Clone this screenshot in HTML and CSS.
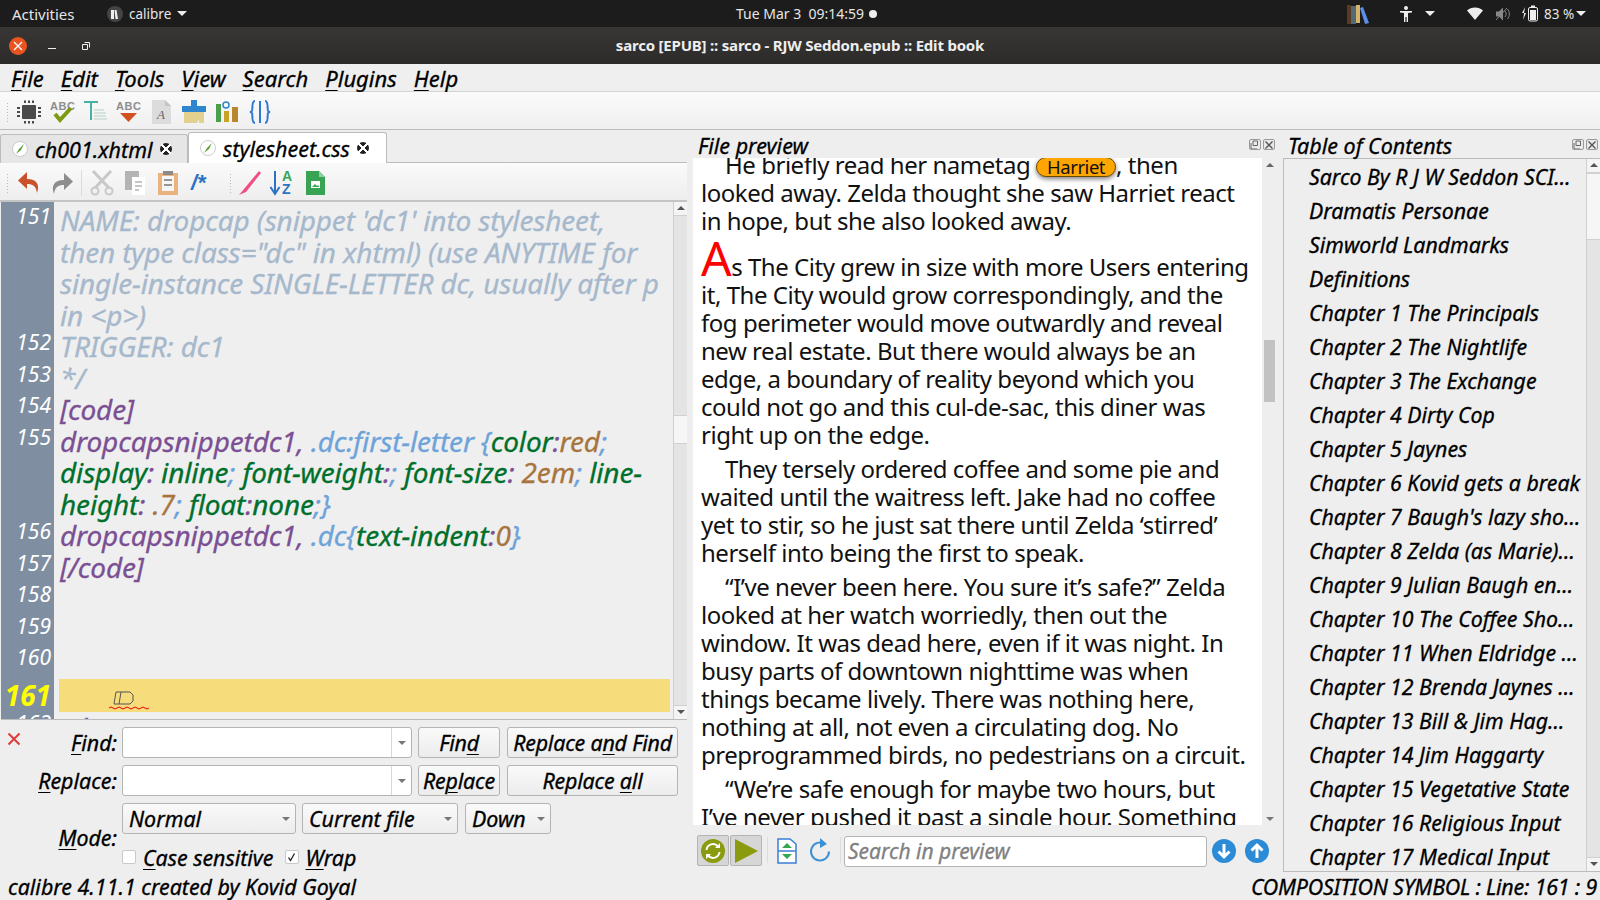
FILE: index.html
```html
<!DOCTYPE html>
<html lang="en">
<head>
<meta charset="utf-8">
<title>sarco - Edit book</title>
<link rel="stylesheet" href="styles.css">
</head>
<body>
<header class="topbar">
  <span class="activities">Activities</span>
  <span class="appmenu">
    <span class="appdot"><svg width="14" height="14" viewBox="0 0 14 14"><path d="M3 3h3v9H3zM6.500 3h2l1.500 9h-2.500z" fill="#eee"/></svg></span>
    calibre <i class="tri"></i>
  </span>
  <span class="clock">Tue Mar 3&nbsp; 09:14:59 <i class="dot"></i></span>
  <span class="tray">
    <svg class="tray-books" width="22" height="22" viewBox="0 0 22 22"><rect x="0" y="2" width="4" height="19" fill="#5a3a22"/><rect x="4" y="3" width="5" height="18" fill="#4f6a78"/><rect x="9" y="2" width="4" height="18" fill="#d8b36a"/><path d="M13 5l3-1 6 16-4 1z" fill="#5a8ee8"/></svg>
    <svg class="tray-person" width="14" height="18" viewBox="0 0 14 18"><circle cx="7" cy="3" r="2" fill="#eee"/><path d="M1 6h12v1.500l-4 .5v9H7.600v-5h-1.200v5H5V8L1 7.500z" fill="#eee"/></svg>
    <i class="tri tray-tri"></i>
    <svg class="tray-wifi" width="16" height="13" viewBox="0 0 16 13"><path d="M0 3.500C4-.5 12-.5 16 3.500L8 13z" fill="#eee"/></svg>
    <svg class="tray-vol" width="16" height="16" viewBox="0 0 16 16"><path d="M1 5.500h3l4-4v13l-4-4H1z" fill="#888"/><path d="M10 5c1.500 2 1.500 4 0 6M12.500 3c2.500 3 2.500 7 0 10" stroke="#888" fill="none"/><path d="M1 14L12 2" stroke="#888"/></svg>
    <svg class="tray-bat" width="16" height="17" viewBox="0 0 16 17"><path d="M3 2L0 8h2v1L1 15l3-7H2z" fill="#eee"/><rect x="6.500" y="2.500" width="9" height="13.500" rx="1.500" fill="none" stroke="#eee"/><rect x="9" y="0.500" width="4" height="2" fill="#eee"/><rect x="8" y="5" width="6" height="10" fill="#eee"/></svg>
    <span class="tray-pct">83 %</span>
    <i class="tri"></i>
  </span>
</header>

<div class="titlebar">
  <span class="win-btns">
    <span class="win-close"><svg width="10" height="10" viewBox="0 0 10 10"><path d="M1 1l8 8M9 1l-8 8" stroke="#fff" stroke-width="1.300"/></svg></span>
    <span class="win-min"></span>
    <span class="win-max"><svg width="8" height="8" viewBox="0 0 8 8"><path d="M2.500.5h5v5M.5 2.500h5v5h-5z" fill="none" stroke="#eee"/></svg></span>
  </span>
  <span class="wintitle">sarco [EPUB] :: sarco - RJW Seddon.epub :: Edit book</span>
</div>

<nav class="menubar">
  <span><u>F</u>ile</span><span><u>E</u>dit</span><span><u>T</u>ools</span><span><u>V</u>iew</span><span><u>S</u>earch</span><span><u>P</u>lugins</span><span><u>H</u>elp</span>
</nav>

<div class="toolbar tb-main">
  <i class="grip"></i>
  <span class="tool"><svg width="26" height="26" viewBox="0 0 26 26"><rect x="6" y="6" width="14" height="14" rx="1" fill="#4a4a4a"/><path d="M9 1.500v2.500M13 1.500v2.500M17 1.500v2.500M9 22v2.500M13 22v2.500M17 22v2.500M1 9h3M1 13h3M1 17h3M22 9h3M22 13h3M22 17h3" stroke="#4a4a4a" stroke-width="2"/></svg></span>
  <span class="tool"><svg width="26" height="26" viewBox="0 0 26 26"><text x="1" y="11" class="ic-abc">ABC</text><path d="M6 15l5 6L22 9" fill="none" stroke="#7d9a12" stroke-width="4"/></svg></span>
  <span class="tool"><svg width="26" height="26" viewBox="0 0 26 26"><path d="M2 3h14M9 3v18" stroke="#44b3a4" stroke-width="2" fill="none"/><path d="M12 11h10M12 14h12M12 17h12M12 20h13" stroke="#b8cfc8"/></svg></span>
  <span class="tool"><svg width="26" height="26" viewBox="0 0 26 26"><text x="1" y="11" class="ic-abc">ABC</text><path d="M5 14h17l-8.500 9z" fill="#d2521f"/></svg></span>
  <span class="tool"><svg width="26" height="26" viewBox="0 0 26 26"><path d="M4 1h13l6 6v18H4z" fill="#dcdcdc"/><path d="M17 1l6 6h-6z" fill="#c4c4c4"/><text x="9" y="20" class="ic-a">A</text></svg></span>
  <span class="tool"><svg width="26" height="26" viewBox="0 0 26 26"><path d="M10 1h6v6h9v6H1V7h9z" fill="#2e86cf"/><path d="M3 13h20v11h-5v-4l-2 4H3z" fill="#e2d08e"/></svg></span>
  <span class="tool"><svg width="26" height="26" viewBox="0 0 26 26"><rect x="2" y="5" width="5" height="18" fill="#4a9e4c"/><rect x="10" y="12" width="5" height="11" fill="#c9a227"/><rect x="18" y="8" width="6" height="15" fill="#b8862c"/><circle cx="12" cy="6" r="3" fill="none" stroke="#2e86cf" stroke-width="1.500"/></svg></span>
  <span class="tool"><svg width="26" height="26" viewBox="0 0 26 26"><path d="M8 2c-4 0-2 9-3 10-.5.700-2 1-2 1s1.500.3 2 1c1 1-1 10 3 10M18 2c4 0 2 9 3 10 .5.700 2 1 2 1s-1.500.3-2 1c-1 1 1 10-3 10" fill="none" stroke="#2c78d4" stroke-width="2"/><path d="M13 2v22" stroke="#2c78d4" stroke-width="2"/></svg></span>
</div>

<main class="workspace">
  <section class="left">
    <div class="tabs">
      <span class="tab"><svg class="tab-ic" width="16" height="16" viewBox="0 0 16 16"><circle cx="8" cy="8" r="7.500" fill="#fff" stroke="#ccc"/><path d="M4 13l3-5 5-5-3 6z" fill="#5a9e2f"/></svg>ch001.xhtml<i class="tab-x"></i></span>
      <span class="tab tab-on"><svg class="tab-ic" width="16" height="16" viewBox="0 0 16 16"><circle cx="8" cy="8" r="7.500" fill="#fff" stroke="#ccc"/><path d="M4 13l3-5 5-5-3 6z" fill="#5a9e2f"/></svg>stylesheet.css<i class="tab-x"></i></span>
    </div>
    <div class="toolbar tb-edit">
      <i class="grip"></i>
      <span class="tool"><svg width="26" height="26" viewBox="0 0 26 26"><path d="M11 2L2 10.500l9 8.500v-5c6 0 9 2 10 9 3-8 0-14-10-14z" fill="#c9502a"/></svg></span>
      <span class="tool"><svg width="26" height="26" viewBox="0 0 26 26"><path d="M15 3l9 8.500-9 8.500v-5c-6 0-9 2-10 9-3-8 0-14 10-14z" fill="#8d8d8d"/></svg></span>
      <i class="sep"></i>
      <span class="tool"><svg width="26" height="26" viewBox="0 0 26 26"><path d="M4 1l16 17M22 1L6 18" stroke="#c8c8c8" stroke-width="3"/><circle cx="6" cy="21" r="3.500" fill="none" stroke="#c8c8c8" stroke-width="2"/><circle cx="20" cy="21" r="3.500" fill="none" stroke="#c8c8c8" stroke-width="2"/></svg></span>
      <span class="tool"><svg width="26" height="26" viewBox="0 0 26 26"><rect x="3" y="1" width="14" height="19" fill="#b4b4b4"/><rect x="10" y="7" width="13" height="18" fill="#fff"/><path d="M13 12h7M13 16h7M13 20h4" stroke="#b4b4b4" stroke-width="1.500"/></svg></span>
      <span class="tool"><svg width="26" height="26" viewBox="0 0 26 26"><rect x="3" y="3" width="20" height="22" fill="#e9b27e"/><rect x="7" y="6" width="12" height="15" fill="#f6f6f6"/><rect x="8" y="1" width="10" height="4" fill="#8a8a8a"/><path d="M9 10h8M9 15h8" stroke="#777" stroke-width="1.500"/></svg></span>
      <span class="tool"><svg width="26" height="26" viewBox="0 0 26 26"><text x="3" y="20" class="ic-cm">/*</text></svg></span>
      <i class="grip grip-mid"></i>
      <span class="tool"><svg width="26" height="26" viewBox="0 0 26 26"><path d="M23 1L8 19l-5 6 7-3L25 3z" fill="#ef4d86"/></svg></span>
      <span class="tool"><svg width="26" height="26" viewBox="0 0 26 26"><path d="M6 1v21M1.500 17L6 24l4.500-7" fill="none" stroke="#2a72c4" stroke-width="2"/><text x="13" y="11" class="ic-az ic-az-a">A</text><text x="13" y="24" class="ic-az ic-az-z">Z</text></svg></span>
      <span class="tool"><svg width="26" height="26" viewBox="0 0 26 26"><path d="M4 1h13l6 6v18H4z" fill="#38a353"/><path d="M17 1l6 6h-6z" fill="#8fd0a0"/><rect x="9" y="11" width="9" height="7" fill="#fff"/><path d="M10 17l3-3 2 2 1-1 1.500 2z" fill="#38a353"/></svg></span>
    </div>

    <div class="editor">
      <div class="gutter"></div>
      <div class="code">
        <div class="ln"><b>151</b><p class="c-com">NAME: dropcap (snippet 'dc1' into stylesheet,<br>then type class="dc" in xhtml) (use ANYTIME for<br>single-instance SINGLE-LETTER dc, usually after p<br>in &lt;p&gt;)</p></div>
        <div class="ln"><b>152</b><p class="c-com">TRIGGER: dc1</p></div>
        <div class="ln"><b>153</b><p class="c-com">*/</p></div>
        <div class="ln"><b>154</b><p class="c-pur">[code]</p></div>
        <div class="ln"><b>155</b><p><span class="c-pur">dropcapsnippetdc1,</span> <span class="c-blu">.dc:first-letter {</span><span class="c-grn">color</span><span class="c-pur">:</span><span class="c-brn">red</span><span class="c-blu">;</span><br><span class="c-grn">display</span><span class="c-pur">:</span> <span class="c-grn">inline</span><span class="c-blu">;</span> <span class="c-grn">font-weight</span><span class="c-pur">:</span><span class="c-blu">;</span> <span class="c-grn">font-size</span><span class="c-pur">:</span> <span class="c-brn">2em</span><span class="c-blu">;</span> <span class="c-grn">line-</span><br><span class="c-grn">height</span><span class="c-pur">:</span> <span class="c-brn">.7</span><span class="c-blu">;</span> <span class="c-grn">float</span><span class="c-pur">:</span><span class="c-grn">none</span><span class="c-blu">;}</span></p></div>
        <div class="ln"><b>156</b><p><span class="c-pur">dropcapsnippetdc1,</span> <span class="c-blu">.dc{</span><span class="c-grn">text-indent</span><span class="c-pur">:</span><span class="c-brn">0</span><span class="c-blu">}</span></p></div>
        <div class="ln"><b>157</b><p class="c-pur">[/code]</p></div>
        <div class="ln"><b>158</b><p>&nbsp;</p></div>
        <div class="ln"><b>159</b><p>&nbsp;</p></div>
        <div class="ln"><b>160</b><p>&nbsp;</p></div>
        <div class="ln ln-cur"><b>161</b><p><span class="cs-wrap"><span class="cs-glyph"><svg width="22" height="14" viewBox="0 0 22 14"><path d="M3 1h14l3 3v6l-3 3H1zM8 1L6 13" fill="none" stroke="#555" stroke-width="1"/></svg></span><svg class="squig" width="40" height="4" viewBox="0 0 40 4"><path d="M0 2q2-2 4 0t4 0 4 0 4 0 4 0 4 0 4 0 4 0 4 0 4 0" fill="none" stroke="#e00" stroke-width="1"/></svg></span></p></div>
        <div class="ln"><b>162</b><p class="c-pur">&lt;/p&gt;</p></div>
      </div>
      <div class="vscroll">
        <i class="sb-btn sb-up"></i>
        <div class="sb-track"><i class="sb-thumb"></i></div>
        <i class="sb-btn sb-down"></i>
      </div>
    </div>

    <form class="findpanel">
      <span class="fp-x"><svg width="14" height="14" viewBox="0 0 14 14"><path d="M1.500 1.500l11 11M12.500 1.500l-11 11" stroke="#e03b3b" stroke-width="2"/></svg></span>
      <label class="fp-label"><u>F</u>ind:</label>
      <span class="fp-input"><i class="fp-drop"><i class="tri-g"></i></i></span>
      <button type="button" class="btn btn-a"><span>Fin<u>d</u></span></button>
      <button type="button" class="btn btn-b">Replace a<u>n</u>d Find</button>
      <label class="fp-label"><u>R</u>eplace:</label>
      <span class="fp-input"><i class="fp-drop"><i class="tri-g"></i></i></span>
      <button type="button" class="btn btn-a">Re<u>p</u>lace</button>
      <button type="button" class="btn btn-b">Replace <u>a</u>ll</button>
      <label class="fp-label fp-mode"><u>M</u>ode:</label>
      <div class="fp-opts">
        <div class="fp-combos">
          <span class="combo combo-1">Normal<i class="tri-g"></i></span>
          <span class="combo combo-2">Current file<i class="tri-g"></i></span>
          <span class="combo combo-3">Down<i class="tri-g"></i></span>
        </div>
        <div class="fp-checks">
          <i class="check"></i><span class="chk-l1"><u>C</u>ase sensitive</span>
          <i class="check check-on"><svg width="11" height="11" viewBox="0 0 11 11"><path d="M2.500 5.500l2 3 4-7" fill="none" stroke="#222" stroke-width="1.300"/></svg></i><span><u>W</u>rap</span>
        </div>
      </div>
    </form>
  </section>

  <section class="preview">
    <div class="dock-head"><span>File preview</span><span class="dock-btns"><i class="dk"><svg width="12" height="12" viewBox="0 0 12 12"><path d="M4 6.500h4.500V2H4zM2 4v6h6" fill="none" stroke="#666"/></svg></i><i class="dk"><svg width="12" height="12" viewBox="0 0 12 12"><path d="M2.500 2.500l7 7M9.500 2.500l-7 7" stroke="#555" stroke-width="1.400"/></svg></i></span></div>
    <div class="pv-body">
      <article class="pv-page">
        <div class="pv-scroll">
          <p class="ind">He briefly read her nametag <mark class="pill">Harriet</mark>, then<br>looked away. Zelda thought she saw Harriet react<br>in hope, but she also looked away.</p>
          <p class="drop-p"><span class="dropcap">A</span>s The City grew in size with more Users entering<br>it, The City would grow correspondingly, and the<br>fog perimeter would move outwardly and reveal<br>new real estate. But there would always be an<br>edge, a boundary of reality beyond which you<br>could not go and this cul-de-sac, this diner was<br>right up on the edge.</p>
          <p class="ind">They tersely ordered coffee and some pie and<br>waited until the waitress left. Jake had no coffee<br>yet to stir, so he just sat there until Zelda ‘stirred’<br>herself into being the first to speak.</p>
          <p class="ind">“I’ve never been here. You sure it’s safe?” Zelda<br>looked at her watch worriedly, then out the<br>window. It was dead here, even if it was night. In<br>busy parts of downtown nighttime was when<br>things became lively. There was nothing here,<br>nothing at all, not even a circulating dog. No<br>preprogrammed birds, no pedestrians on a circuit.</p>
          <p class="ind">“We’re safe enough for maybe two hours, but<br>I’ve never pushed it past a single hour. Something</p>
        </div>
      </article>
      <div class="pv-sb"><i class="tri-up"></i><i class="pv-thumb"></i><i class="tri-g"></i></div>
    </div>
    <div class="pv-tools">
      <span class="pv-btn"><svg width="26" height="26" viewBox="0 0 26 26"><circle cx="13" cy="13" r="12" fill="#8a9b0f"/><path d="M6.500 12a6.500 6.500 0 0 1 11.500-3.500M19.500 14a6.500 6.500 0 0 1-11.500 3.500" fill="none" stroke="#fff" stroke-width="2"/><path d="M20 5v5h-5zM6 21v-5h5z" fill="#fff"/></svg></span>
      <span class="pv-btn"><svg width="26" height="26" viewBox="0 0 26 26"><path d="M2 1l23 12L2 25z" fill="#8a9b0f"/></svg></span>
      <i class="sep sep-a"></i>
      <span class="tool"><svg width="20" height="26" viewBox="0 0 20 26"><path d="M1 1h12l6 5v19H1z" fill="#fff" stroke="#3a7fd8" stroke-width="1.500"/><path d="M1 13h18" stroke="#3a7fd8" stroke-width="1.500"/><path d="M5 10l5-5 5 5zM5 16l5 5 5-5z" fill="#37a653"/></svg></span>
      <span class="tool"><svg width="24" height="26" viewBox="0 0 24 26"><path d="M17 6a9 9 0 1 0 4 7.500" fill="none" stroke="#3d8fd6" stroke-width="2"/><path d="M12 0l7 6-7 4z" fill="#3d8fd6"/></svg></span>
      <i class="sep sep-b"></i>
      <span class="pv-search">Search in preview</span>
      <span class="circ"><svg width="24" height="24" viewBox="0 0 24 24"><circle cx="12" cy="12" r="12" fill="#2b8bd6"/><path d="M12 5v13M6.500 12.500L12 18l5.500-5.500" fill="none" stroke="#fff" stroke-width="3"/></svg></span>
      <span class="circ"><svg width="24" height="24" viewBox="0 0 24 24"><circle cx="12" cy="12" r="12" fill="#2b8bd6"/><path d="M12 19V6M6.500 11.500L12 6l5.500 5.500" fill="none" stroke="#fff" stroke-width="3"/></svg></span>
    </div>
  </section>

  <aside class="toc">
    <div class="dock-head"><span>Table of Contents</span><span class="dock-btns"><i class="dk"><svg width="12" height="12" viewBox="0 0 12 12"><path d="M4 6.500h4.500V2H4zM2 4v6h6" fill="none" stroke="#666"/></svg></i><i class="dk"><svg width="12" height="12" viewBox="0 0 12 12"><path d="M2.500 2.500l7 7M9.500 2.500l-7 7" stroke="#555" stroke-width="1.400"/></svg></i></span></div>
    <div class="toc-tree">
      <ul class="toc-list">
        <li>Sarco By R J W Seddon SCI…</li>
        <li>Dramatis Personae</li>
        <li>Simworld Landmarks</li>
        <li>Definitions</li>
        <li>Chapter 1 The Principals</li>
        <li>Chapter 2 The Nightlife</li>
        <li>Chapter 3 The Exchange</li>
        <li>Chapter 4 Dirty Cop</li>
        <li>Chapter 5 Jaynes</li>
        <li>Chapter 6 Kovid gets a break</li>
        <li>Chapter 7 Baugh's lazy sho…</li>
        <li>Chapter 8 Zelda (as Marie)…</li>
        <li>Chapter 9 Julian Baugh en…</li>
        <li>Chapter 10 The Coffee Sho…</li>
        <li>Chapter 11 When Eldridge …</li>
        <li>Chapter 12 Brenda Jaynes …</li>
        <li>Chapter 13 Bill &amp; Jim Hag…</li>
        <li>Chapter 14 Jim Haggarty</li>
        <li>Chapter 15 Vegetative State</li>
        <li>Chapter 16 Religious Input</li>
        <li>Chapter 17 Medical Input</li>
      </ul>
      <div class="vscroll toc-sb">
        <i class="sb-btn sb-up"></i>
        <div class="sb-track"><i class="sb-thumb toc-thumb"></i></div>
        <i class="sb-btn sb-down"></i>
      </div>
    </div>
  </aside>
</main>

<footer class="status">
  <span class="st-l">calibre 4.11.1 created by Kovid Goyal</span>
  <span class="st-r">COMPOSITION SYMBOL : Line: 161 : 9</span>
</footer>
</body>
</html>
```
FILE: styles.css
```css
* { box-sizing: border-box; }
html, body { margin: 0; height: 900px; overflow: hidden; }
body {
  display: flex; flex-direction: column; width: 1600px;
  background: #eeeeee; color: #000;
  font-family: "Noto Sans", "DejaVu Sans", sans-serif;
  font-style: italic; font-size: 22px;
}
i { font-style: normal; display: inline-block; }
u { text-underline-offset: 3px; text-decoration-thickness: 1px; }
.menubar, .tab, .code, .findpanel, .dock-head, .toc-list, .status, .pv-search { -webkit-text-stroke: 0.3px; }

/* GNOME top bar */
.topbar {
  height: 27px; flex: none; display: flex; align-items: center;
  background: #1c1c1c; color: #e6e6e6; font-style: normal; font-size: 14px;
  position: relative;
}
.activities { margin-left: 12px; width: 95px; font-size: 15px; }
.appmenu { display: flex; align-items: center; gap: 6px; font-size: 13.5px; }
.appdot { width: 16px; height: 16px; border-radius: 50%; background: #444; display: flex; align-items: center; justify-content: center; }
.tri { width: 0; height: 0; border: 5px solid transparent; border-top: 5px solid #eee; border-bottom: 0; }
.clock { position: absolute; left: 736px; display: flex; align-items: center; gap: 1px; white-space: pre; }
.dot { width: 8px; height: 8px; border-radius: 50%; background: #eee; }
.tray { margin-left: auto; display: flex; align-items: center; padding-right: 14px; }
.tray-books { margin-right: 30px; }
.tray-tri { margin-left: 12px; margin-right: 32px; }
.tray-vol { margin-left: 12px; }
.tray-bat { margin-left: 11px; }
.tray-pct { margin: 0 5px 0 6px; width: 27px; font-size: 13.500px; white-space: nowrap; }

/* window title */
.titlebar {
  height: 37px; flex: none; display: flex; align-items: center; position: relative;
  background: linear-gradient(#383735, #2c2b2a); color: #eee;
}
.win-btns { display: flex; align-items: center; padding-left: 9px; }
.win-close { width: 18px; height: 18px; border-radius: 50%; background: #e95420; display: flex; align-items: center; justify-content: center; }
.win-min { width: 8px; height: 1px; background: #eee; margin-left: 21px; margin-top: 5px; }
.win-max { margin-left: 26px; display: flex; }
.wintitle { position: absolute; left: 0; right: 0; margin-top: -1px; text-align: center; font: bold 15px "Noto Sans", sans-serif; letter-spacing: -0.2px; }

/* menu */
.menubar {
  height: 28px; flex: none; display: flex; gap: 17px; align-items: center;
  padding-left: 11px; font-size: 22px; background: #efefef;
  border-bottom: 1px solid #d4d4d4;
}

/* toolbars */
.toolbar { display: flex; align-items: center; flex: none; }
.tb-main { height: 38px; background: linear-gradient(#fafafa, #f0f0f0); border-bottom: 1px solid #bcbcbc; padding: 2px 0 0 6px; }
.grip { width: 3px; height: 20px; margin-right: 3px; background-image: radial-gradient(#bbb 40%, transparent 45%); background-size: 3px 3px; }
.tool { width: 33px; display: flex; align-items: center; justify-content: center; }
.sep { width: 1px; height: 26px; background: #dcdcdc; margin: 0 5px; }
.ic-abc { font: bold 11px "Liberation Sans", sans-serif; fill: #8d8d8d; letter-spacing: 0.5px; }
.ic-a { font: italic 13px "Liberation Serif", serif; fill: #666; }
.ic-cm { font: italic bold 22px "Liberation Sans", sans-serif; fill: #2a72c4; }
.ic-az { font: bold 14px "Liberation Sans", sans-serif; }
.ic-az-a { fill: #37a653; }
.ic-az-z { fill: #2a72c4; }

/* workspace */
.workspace { height: 742px; flex: none; display: flex; align-items: stretch; }
.left { width: 687px; flex: none; display: flex; flex-direction: column; }
.tabs { height: 33px; flex: none; display: flex; align-items: flex-end; padding-top: 2px; border-bottom: 1px solid #bcbcbc; }
.tab {
  height: 29px; width: 188px; display: flex; align-items: center; gap: 5px;
  padding-left: 11px; background: #e6e6e6; border: 1px solid #bcbcbc; border-bottom: 0;
  border-radius: 3px 3px 0 0; font-size: 21.5px; position: relative; top: 1px; flex: none;
}
.tab-on { height: 31px; width: 199px; background: #fff; padding-left: 11px; }
.tab-ic { flex: none; margin-right: 2px; }
.tab-x {
  width: 12px; height: 12px; border-radius: 50%; background:
  linear-gradient(45deg, transparent 44%, #fff 44%, #fff 56%, transparent 56%),
  linear-gradient(-45deg, transparent 44%, #fff 44%, #fff 56%, transparent 56%), #222;
  margin-left: 2px; flex: none;
}
.tb-edit { height: 39px; padding: 3px 0 0 6px; background: linear-gradient(#fafafa, #eeeeee); border-bottom: 2px solid #c4c4c4; }
.grip-mid { margin-left: 12px; margin-right: 0; }
.tb-edit .sep { margin: 0 3px 0 3px; }

/* editor */
.editor { height: 518px; flex: none; display: flex; position: relative; overflow: hidden; background: #efefef; margin-left: 1px; border-bottom: 1px solid #bcbcbc; }
.gutter { position: absolute; left: 0; top: 0; bottom: 0; width: 53px; background: #7f8fa1; }
.code { flex: 1; position: relative; font-size: 28px; line-height: 31.5px; overflow: hidden; padding-top: 3px; letter-spacing: -0.15px; }
.ln { display: flex; align-items: flex-start; }
.ln b { width: 53px; flex: none; color: #fff; font-weight: normal; font-size: 21px; line-height: 23px; text-align: right; padding-right: 3px; letter-spacing: 0; -webkit-text-stroke: 0; }
.ln p { margin: 0 0 0 6px; white-space: nowrap; flex: 1; }
.ln-cur { position: relative; height: 33px; margin: 1.5px 0 0; }
.ln-cur b { color: #ffff00; font-weight: bold; font-size: 28px; line-height: 33px; }
.ln-cur p { margin-left: 5px; margin-right: 3px; background: #f7dc7c; height: 33px; position: relative; }
.cs-wrap { position: absolute; left: 50px; top: 12px; display: block; width: 42px; height: 22px; }
.cs-glyph { position: absolute; left: 4px; top: 0; display: block; line-height: 0; }
.squig { position: absolute; left: 0; top: 15px; }
.c-com { color: #a6b8cc; }
.c-pur { color: #7b4f93; }
.c-blu { color: #6ea3da; }
.c-grn { color: #006f2c; }
.c-brn { color: #a8743e; }

.vscroll { width: 14px; flex: none; display: flex; flex-direction: column; background: #e4e4e4; margin-right: 0; border-left: 1px solid #d0d0d0; }
.editor .vscroll { position: relative; }
.sb-btn { height: 14px; flex: none; background: #f4f4f4; position: relative; border: 0 solid #d0d0d0; }
.sb-up { border-bottom-width: 1px; }
.sb-down { border-top-width: 1px; }
.sb-up::after, .sb-down::after { content: ""; position: absolute; left: 3px; top: 4px; border: 4px solid transparent; }
.sb-up::after { border-bottom: 4px solid #555; border-top: 0; }
.sb-down::after { border-top: 4px solid #555; border-bottom: 0; }
.sb-track { flex: 1; position: relative; }
.sb-thumb { position: absolute; left: 0; right: 0; top: 199px; height: 29px; background: #f6f6f6; border: 1px solid #d0d0d0; border-width: 1px 0; }

/* find panel */
.findpanel {
  flex: 1; position: relative; display: grid;
  grid-template-columns: 122px 290px 88px 178px;
  grid-template-rows: 31px 31px auto; row-gap: 7px; padding-top: 7px;
  font-size: 21.4px; align-items: center;
}
.fp-x { position: absolute; left: 7px; top: 12px; line-height: 0; }
.fp-label { text-align: right; padding-right: 5px; }
.fp-mode { align-self: center; }
.fp-input { display: flex; justify-content: flex-end; height: 31px; background: #fff; border: 1px solid #b4b4b4; border-radius: 3px; width: 290px; }
.fp-drop { width: 20px; border-left: 1px solid #d8d8d8; display: flex; align-items: center; justify-content: center; }
.tri-g { width: 0; height: 0; border: 4px solid transparent; border-top: 4px solid #777; border-bottom: 0; }
.tri-up { width: 0; height: 0; border: 4px solid transparent; border-bottom: 4px solid #666; border-top: 0; }
.btn {
  height: 31px; padding: 0; font: inherit; color: #000; background: linear-gradient(#fafafa, #ececec);
  border: 1px solid #b4b4b4; border-radius: 3px; white-space: nowrap; letter-spacing: -0.2px; -webkit-text-stroke: inherit;
}
.btn-a { width: 82px; margin-left: 6px; }
.btn-b { width: 171px; margin-left: 7px; }
.fp-opts { grid-column: 2 / 5; display: flex; flex-direction: column; align-self: start; }
.fp-combos { display: flex; gap: 6px; height: 31px; }
.combo {
  display: flex; align-items: center; justify-content: space-between; padding: 0 5px 0 6px;
  height: 31px; background: linear-gradient(#fafafa, #ececec); border: 1px solid #b4b4b4; border-radius: 3px;
}
.combo-1 { width: 174px; }
.combo-2 { width: 156px; }
.combo-3 { width: 86px; margin-left: 1px; }
.fp-checks { display: flex; align-items: center; margin-top: 10px; height: 26px; }
.check { width: 14px; height: 14px; background: #fff; border: 1px solid #c8c8c8; border-radius: 2px; display: flex; align-items: center; justify-content: center; }
.chk-l1 { margin: 0 11px 0 7px; }
.check-on + span { margin-left: 7px; }

/* preview */
.preview { width: 590px; flex: none; margin-left: 6px; display: flex; flex-direction: column; }
.dock-head { height: 28px; flex: none; display: flex; align-items: flex-start; justify-content: space-between; font-size: 21.5px; line-height: 32px; padding-left: 5px; position: relative; }
.dock-btns { display: flex; gap: 2px; position: absolute; right: 0; top: 9px; }
.dk { width: 12px; height: 11px; border: 1px solid #9a9a9a; border-radius: 2px; background: #eaeaea; display: flex; align-items: center; justify-content: center; overflow: hidden; }
.dk svg { flex: none; }
.preview .dock-btns { right: 8px; }
.pv-body { height: 667px; flex: none; display: flex; }
.pv-page { width: 569px; flex: none; background: #fff; overflow: hidden; }
.pv-scroll { margin-top: -7px; padding-left: 8px; font-style: normal; font-size: 24px; line-height: 28px; letter-spacing: -0.47px; white-space: nowrap; color: #111; }
.pv-scroll p { margin: 0 0 6px; }
.ind { text-indent: 24px; }
.pill { display: inline-block; text-indent: 0; height: 20px; background: #ffa500; color: #111; border: 1px solid #6a4a00; border-radius: 11px; padding: 0 10px; font-size: 18.5px; line-height: 18px; box-shadow: 0 2px 5px rgba(0,0,0,.5); }
.drop-p { padding-top: 3px; }
.dropcap { color: #f00; font-size: 48px; line-height: 28px; }
.pv-sb { width: 21px; display: flex; flex-direction: column; align-items: center; position: relative; background: #eeeeee; padding-top: 5px; }
.pv-thumb { position: absolute; top: 182px; left: 2px; width: 11px; height: 62px; background: #c2c2c2; }
.pv-sb .tri-up { margin-left: -6px; }
.pv-sb .tri-g { position: absolute; bottom: 4px; left: 4px; }
.pv-tools { flex: 1; display: flex; align-items: flex-start; padding: 10px 0 0 4px; }
.pv-btn { width: 32px; height: 31px; background: #d6d6d6; border: 1px solid #b4b4b4; border-radius: 2px; margin-right: 1px; display: flex; align-items: center; justify-content: center; }
.pv-tools .tool { width: 33px; height: 31px; }
.pv-tools .sep { margin-top: 2px; }
.pv-tools .sep-a { margin-left: 4px; margin-right: 2px; }
.pv-tools .sep-b { margin-left: 4px; margin-right: 3px; }
.pv-search { width: 363px; height: 31px; margin-top: 1px; background: #fff; border: 1px solid #b4b4b4; border-radius: 3px; color: #808080; padding-left: 3px; line-height: 28px; font-size: 21px; }
.circ { width: 33px; height: 31px; display: flex; align-items: center; justify-content: center; line-height: 0; }

/* toc */
.toc { flex: 1; display: flex; flex-direction: column; }
.toc .dock-btns { right: 2px; }
.toc-tree { flex: 1; display: flex; background: #eeeeee; border: 1px solid #bcbcbc; border-right: 0; min-height: 0; }
.toc-list { flex: 1; list-style: none; margin: 0; padding: 1px 0 0 25px; overflow: hidden; font-size: 21.3px; letter-spacing: 0; white-space: nowrap; }
.toc-list li { height: 34px; line-height: 34px; }
.toc-sb { width: 14px; }
.toc-thumb { top: 0; height: 67px; }

/* status */
.status { flex: 1; display: flex; justify-content: space-between; align-items: center; padding: 0 3px 0 8px; font-size: 21.4px; }
.st-r { letter-spacing: -0.2px; }
```
